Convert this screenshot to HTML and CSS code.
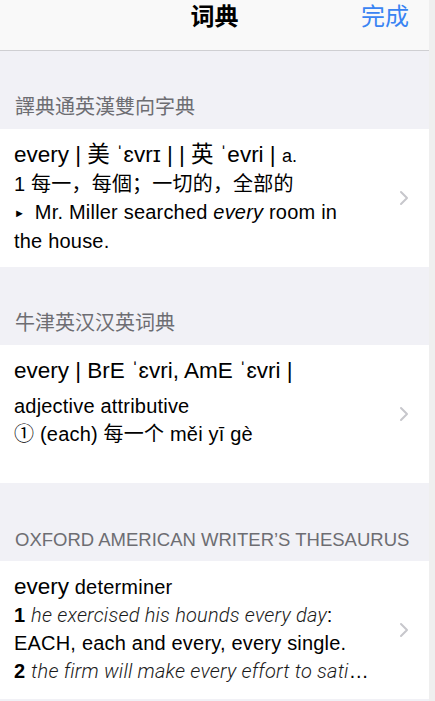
FILE: index.html
```html
<!DOCTYPE html>
<html lang="zh-Hans">

<head>
    <meta charset="UTF-8">
    <title>词典</title>
    <link rel="stylesheet" href="styles.css">
</head>

<body>
    <div id="page">
        <div id="screen">
            <header class="nav">
                <h1 class="nav-title">词典</h1>
                <span class="nav-done">完成</span>
            </header>

            <main class="list">
                <!-- 譯典通 -->
                <div class="section-head tc">譯典通英漢雙向字典</div>
                <div class="cell">
                    <div class="cell-body tc">
                        <p class="head">every | 美 ˈɛvrɪ | | 英 ˈevri | <span class="pos">a.</span></p>
                        <p>1 每一，每個；一切的，全部的</p>
                        <p><span class="tri">►</span> Mr. Miller searched <i>every</i> room in the house.</p>
                    </div>
                    <svg class="chev" width="10" height="16" viewBox="0 0 10 16"><polyline points="2,2 8,8 2,14" /></svg>
                </div>

                <!-- 牛津 -->
                <div class="section-head">牛津英汉汉英词典</div>
                <div class="cell">
                    <div class="cell-body">
                        <p class="head">every | BrE ˈɛvri, AmE ˈɛvri |</p>
                        <p class="gap">adjective attributive</p>
                        <p>① (each) 每一个 měi yī gè</p>
                    </div>
                    <svg class="chev" width="10" height="16" viewBox="0 0 10 16"><polyline points="2,2 8,8 2,14" /></svg>
                </div>

                <!-- thesaurus -->
                <div class="section-head caps">OXFORD AMERICAN WRITER’S THESAURUS</div>
                <div class="cell">
                    <div class="cell-body">
                        <p><span class="word">every</span> determiner</p>
                        <p><b>1</b> <i class="ex">he exercised his hounds every day</i>:</p>
                        <p>EACH, each and every, every single.</p>
                        <p class="clip"><b>2</b> <i class="ex">the firm will make every effort to satisfy their customers</i></p>
                    </div>
                    <svg class="chev" width="10" height="16" viewBox="0 0 10 16"><polyline points="2,2 8,8 2,14" /></svg>
                </div>
            </main>
        </div>
        <div class="edge"></div>
    </div>
</body>

</html>
```

FILE: styles.css
```css
body {
    margin: 0;
    background-color: #efeff4;
    font-family: "Liberation Sans", "Noto Sans CJK SC", sans-serif;
    color: #000;
}

#page {
    display: flex;
    height: 701px;
    overflow: hidden;
}

#screen {
    width: 429px;
    flex: none;
    background-color: #f1f1f6;
}

.edge {
    flex: 1;
    background-color: #efefef;
}

.tc {
    font-family: "Liberation Sans", "Noto Sans CJK TC", sans-serif;
}

/* ナビゲーションバー */
.nav {
    height: 51px;
    box-sizing: border-box;
    background-color: #f9f9f9;
    border-bottom: 1px solid #cfcfd2;
    position: relative;
    display: flex;
    justify-content: center;
    padding-top: 2px;
}

.nav-title {
    margin: 0;
    font-size: 24px;
    font-weight: bold;
    line-height: 30px;
}

.nav-done {
    position: absolute;
    right: 20px;
    top: 2px;
    font-size: 24px;
    line-height: 30px;
    color: #3a84f3;
}

.section-head {
    height: 78px;
    box-sizing: border-box;
    padding: 0 15px 10px;
    display: flex;
    align-items: flex-end;
    font-size: 20px;
    line-height: 24px;
    color: #6d6d72;
}

.section-head.caps {
    font-size: 18.5px;
    padding-bottom: 9px;
}

.cell {
    height: 138px;
    box-sizing: border-box;
    background-color: #fff;
    display: flex;
    align-items: center;
    padding: 0 20px 0 14px;
    gap: 29px;
}

.cell-body {
    flex: 1;
    min-width: 0;
    align-self: flex-start;
    padding-top: 12px;
    font-size: 20px;
    line-height: 28px;
    letter-spacing: 0.2px;
}

.cell-body p {
    margin: 0;
}

.cell-body .head,
.cell-body .word {
    font-size: 22.5px;
    letter-spacing: 0;
}

.cell-body .pos {
    font-size: 18px;
}

.cell-body .gap {
    margin-top: 7px;
}

.tri {
    font-size: 11px;
    vertical-align: 2px;
    margin-right: 4px;
}

.ex {
    font-family: Roboto, "Liberation Sans", sans-serif;
    font-weight: 300;
    color: #1a1a1a;
}

.clip {
    white-space: nowrap;
    overflow: hidden;
    text-overflow: ellipsis;
}

.chev {
    flex: none;
    fill: none;
    stroke: #c7c7cc;
    stroke-width: 2;
    stroke-linecap: round;
    stroke-linejoin: round;
}
```
